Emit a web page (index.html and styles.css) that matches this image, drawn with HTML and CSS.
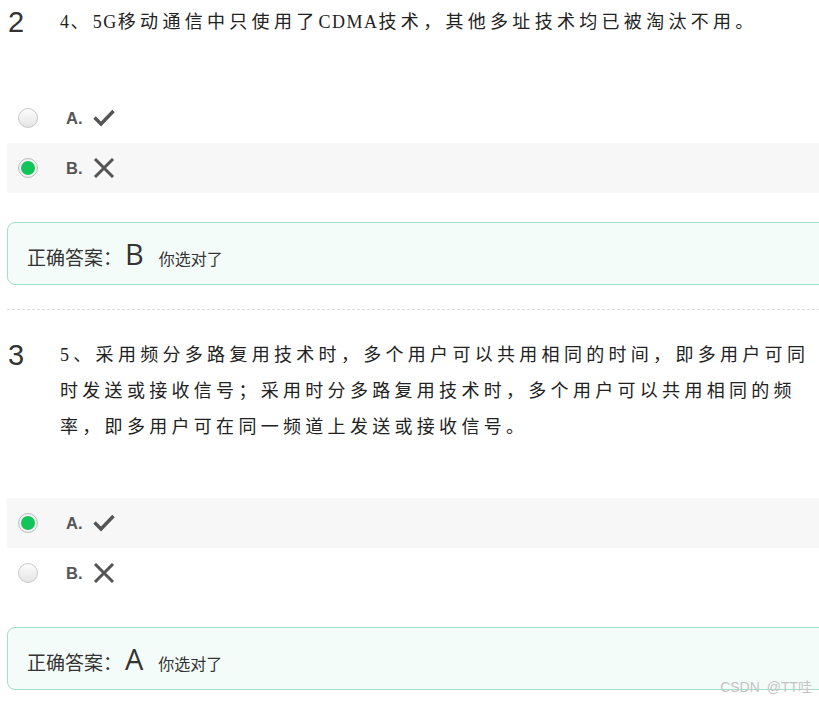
FILE: index.html
```html
<!DOCTYPE html>
<html lang="zh">
<head>
<meta charset="utf-8">
<title>判断题</title>
<link rel="stylesheet" href="styles.css">
</head>
<body>
<div class="page">
  <div class="question">
    <div class="title">
      <div class="num">2</div>
      <div class="text"><span class="latin">4</span>、<span class="latin">5G</span>移动通信中只使用了<span class="latin">CDMA</span>技术，其他多址技术均已被淘汰不用。</div>
    </div>
    <div class="options">
      <div class="option">
        <span class="radio"></span>
        <span class="letter">A.</span>
        <svg class="icon" viewBox="0 0 22 18" width="22" height="18"><path d="M1.5 8.5 L8 15 L20.5 2" fill="none" stroke="#555" stroke-width="3.4"/></svg>
      </div>
      <div class="option selected">
        <span class="radio"><span class="dot"></span></span>
        <span class="letter">B.</span>
        <svg class="icon" viewBox="0 0 22 20" width="22" height="20"><path d="M2 1 L20 19 M20 1 L2 19" fill="none" stroke="#555" stroke-width="3"/></svg>
      </div>
    </div>
    <div class="answer">
      <span class="label">正确答案：</span>
      <span class="key">B</span>
      <span class="result">你选对了</span>
    </div>
  </div>
  <div class="divider"></div>
  <div class="question">
    <div class="title">
      <div class="num">3</div>
      <div class="text">5、采用频分多路复用技术时，多个用户可以共用相同的时间，即多用户可同时发送或接收信号；采用时分多路复用技术时，多个用户可以共用相同的频率，即多用户可在同一频道上发送或接收信号。</div>
    </div>
    <div class="options">
      <div class="option selected">
        <span class="radio"><span class="dot"></span></span>
        <span class="letter">A.</span>
        <svg class="icon" viewBox="0 0 22 18" width="22" height="18"><path d="M1.5 8.5 L8 15 L20.5 2" fill="none" stroke="#555" stroke-width="3.4"/></svg>
      </div>
      <div class="option">
        <span class="radio"></span>
        <span class="letter">B.</span>
        <svg class="icon" viewBox="0 0 22 20" width="22" height="20"><path d="M2 1 L20 19 M20 1 L2 19" fill="none" stroke="#555" stroke-width="3"/></svg>
      </div>
    </div>
    <div class="answer">
      <span class="label">正确答案：</span>
      <span class="key">A</span>
      <span class="result">你选对了</span>
    </div>
  </div>
  <div class="watermark">CSDN @TT哇</div>
</div>
</body>
</html>
```
FILE: styles.css
```css
html, body {
  margin: 0;
  padding: 0;
  background: #fff;
  overflow: hidden;
}
body {
  width: 819px;
  height: 702px;
  position: relative;
}
.page {
  width: 840px;
  padding: 4px 0 0 7px;
  box-sizing: border-box;
  font-family: "Liberation Sans", "Noto Sans CJK SC", sans-serif;
  color: #333;
}
.title {
  display: flex;
  align-items: flex-start;
}
.num {
  width: 53px;
  flex: none;
  font-family: "Liberation Sans", sans-serif;
  font-size: 29px;
  line-height: 36px;
  color: #333;
  padding-left: 1px;
  box-sizing: border-box;
}
.text {
  width: 768px;
  font-family: "Liberation Serif", "Noto Sans CJK SC", serif;
  font-size: 18px;
  line-height: 36px;
  letter-spacing: 4.3px;
  color: #222;
}
.latin {
  letter-spacing: 1.5px;
}
.options {
  margin-top: 53px;
}
.option {
  height: 50px;
  display: flex;
  align-items: center;
}
.option.selected {
  background: #f7f7f7;
}
.radio {
  width: 20px;
  height: 20px;
  box-sizing: border-box;
  border-radius: 50%;
  border: 1px solid #c9c9c9;
  background: linear-gradient(#fdfdfd, #e4e4e4);
  margin-left: 11px;
  display: flex;
  align-items: center;
  justify-content: center;
  flex: none;
}
.selected .radio {
  background: #f3f3f3;
  border-color: #bcbcbc;
}
.dot {
  width: 14px;
  height: 14px;
  border-radius: 50%;
  background: #12c459;
}
.letter {
  margin-left: 28px;
  font-family: "Liberation Sans", sans-serif;
  font-weight: bold;
  font-size: 16.5px;
  color: #555;
  width: 27px;
}
.icon {
  display: block;
}
.answer {
  margin-top: 29px;
  height: 63px;
  box-sizing: border-box;
  border: 1px solid #9fe0c8;
  border-radius: 8px;
  background: #f3fcf9;
  display: flex;
  align-items: baseline;
  padding: 11px 0 0 19px;
}
.label {
  font-size: 19px;
  color: #333;
}
.key {
  font-family: "Open Sans", "Liberation Sans", sans-serif;
  font-size: 29px;
  color: #333;
  margin-left: 3px;
}
.result {
  font-size: 16px;
  color: #333;
  margin-left: 15px;
}
.divider {
  margin-top: 24px;
  border-top: 1px dashed #dcdcdc;
  margin-bottom: 27px;
}
.watermark {
  position: absolute;
  right: 7px;
  bottom: 6px;
  font-family: "Liberation Sans", "Noto Sans CJK SC", sans-serif;
  font-size: 14px;
  color: #c4c4c4;
  word-spacing: 3px;
}
```
